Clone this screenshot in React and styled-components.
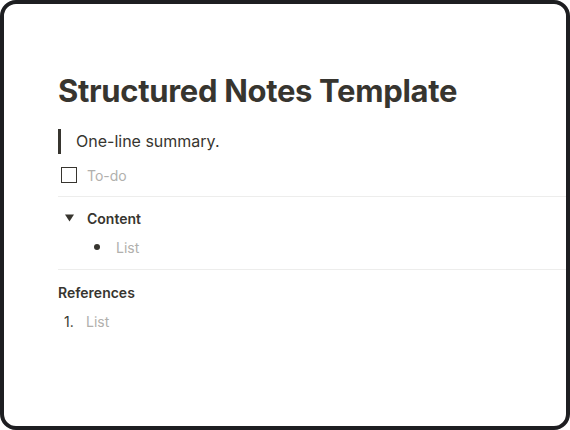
import React from 'react'
import styled, { createGlobalStyle } from 'styled-components';

const Global = createGlobalStyle`
  html, body {
    margin: 0;
    padding: 0;
    background: #fff;
  }
  body {
    font-family: Inter, "Noto Sans", sans-serif;
    color: #37352f;
  }
  * { box-sizing: border-box; }
`

const Frame = styled.div`
  width: 570px;
  height: 430px;
  border: 4px solid #1d1e21;
  border-radius: 16px;
  background: #fff;
  overflow: hidden;
  padding: 68px 0 0 54px;
`

const Title = styled.h1`
  margin: 0 0 19px;
  font-size: 31px;
  font-weight: 700;
  line-height: 38px;
  letter-spacing: -0.32px;
  color: #37352f;
`

const Quote = styled.blockquote`
  margin: 0 0 8px;
  padding: 1px 0 1px 15px;
  border-left: 3px solid #37352f;
  font-size: 16px;
  line-height: 23px;
`

const Todo = styled.div`
  display: flex;
  align-items: center;
  gap: 10px;
  height: 26px;
  padding-left: 3px;
  font-size: 14px;
  color: #b1b0ad;
`

const Checkbox = styled.span`
  width: 16px;
  height: 16px;
  border: 1.5px solid #37352f;
`

const Divider = styled.hr`
  margin: ${p => p.$top}px 0 ${p => p.$bottom}px;
  border: 0;
  border-top: 1px solid #ededec;
`

const Toggle = styled.div`
  display: flex;
  align-items: center;
  height: 28px;
  font-size: 14px;
  font-weight: 600;
`

const Arrow = styled.span`
  width: 29px;
  padding-left: 7px;
  display: flex;
  align-items: center;
`

const Item = styled.div`
  display: flex;
  align-items: center;
  height: 30px;
  padding-left: ${p => p.$indent || 0}px;
  font-size: 14px;
  color: #b1b0ad;
`

const Marker = styled.span`
  width: ${p => p.$w}px;
  padding-left: ${p => p.$pl}px;
  display: flex;
  align-items: center;
  color: #37352f;
`

const Dot = styled.span`
  width: 6px;
  height: 6px;
  border-radius: 50%;
  background: #37352f;
`

const Heading = styled.div`
  height: 28px;
  display: flex;
  align-items: center;
  font-size: 14px;
  font-weight: 600;
`

export default function App() {
  return (
    <>
      <Global />
      <Frame>
        <Title>Structured Notes Template</Title>
        <Quote>One-line summary.</Quote>
        <Todo><Checkbox />To-do</Todo>
        <Divider $top={8} $bottom={7} />
        <Toggle>
          <Arrow>
            <svg width="9" height="8" viewBox="0 0 9 8"><path d="M0 0.5h9L4.5 7.5z" fill="#37352f" /></svg>
          </Arrow>
          Content
        </Toggle>
        <Item $indent={28}><Marker $w={30} $pl={8}><Dot /></Marker>List</Item>
        <Divider $top={7} $bottom={8} />
        <Heading>References</Heading>
        <Item><Marker $w={28} $pl={6}>1.</Marker>List</Item>
      </Frame>
    </>
  );
}
